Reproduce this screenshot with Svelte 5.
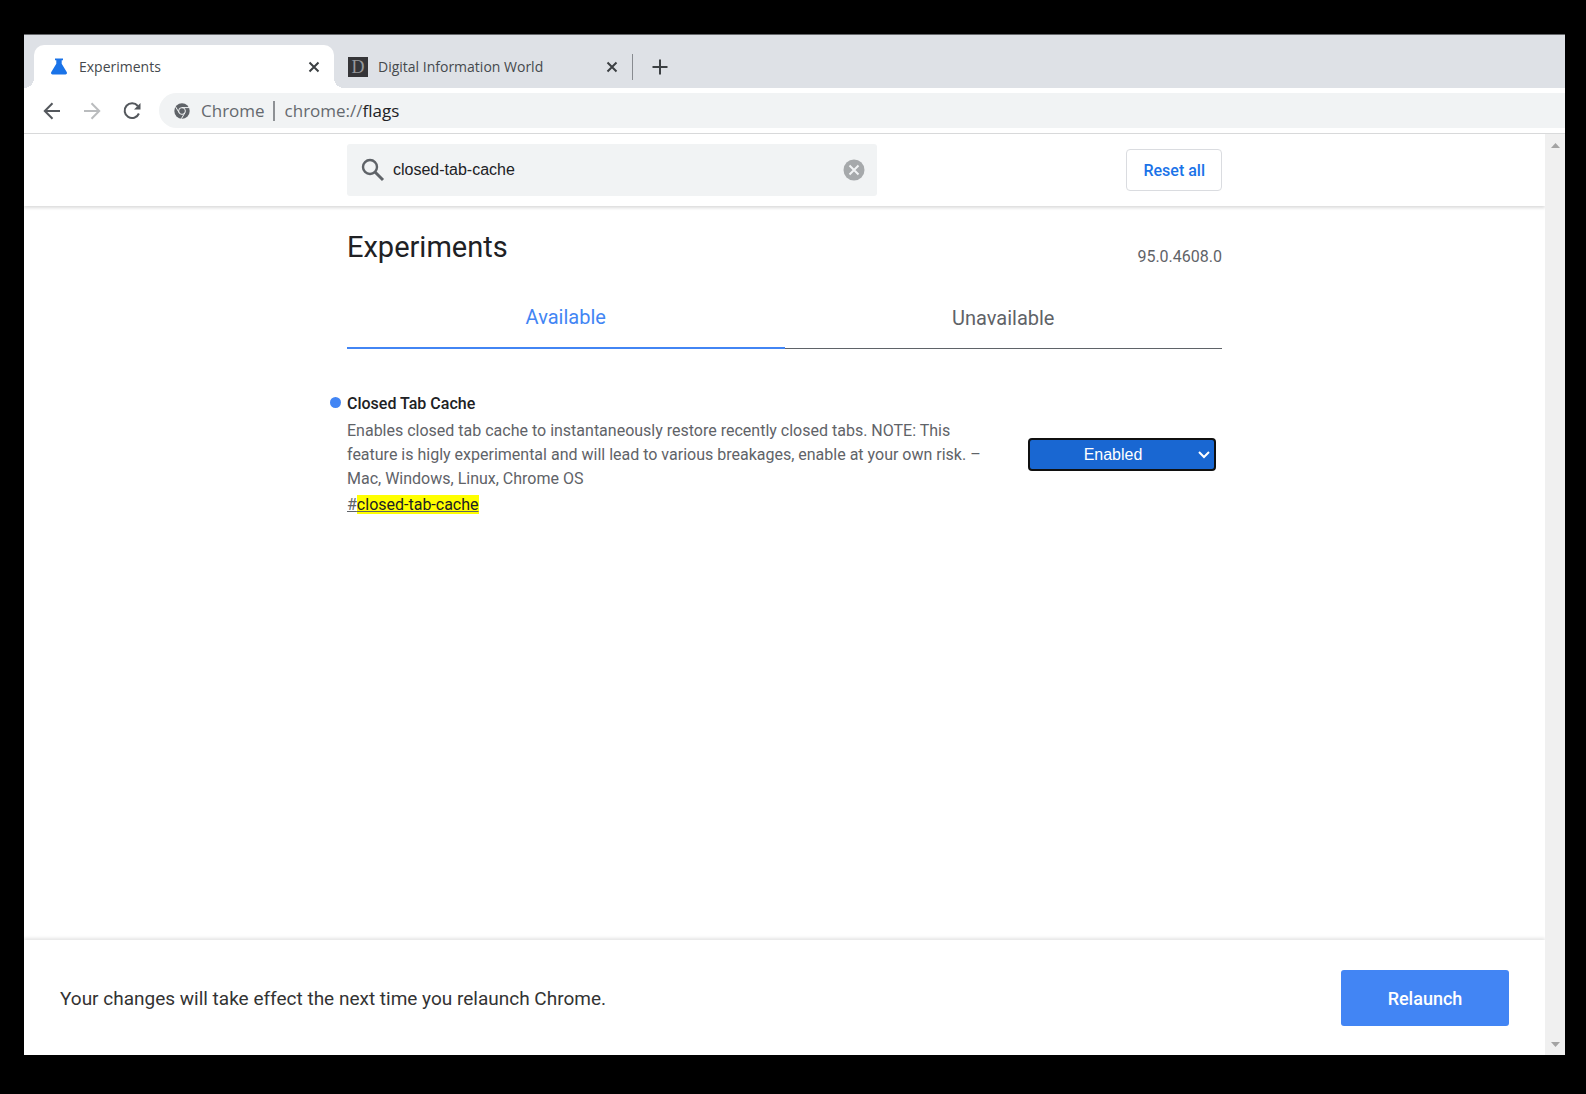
<script lang="ts">
  type Flag = {
    id: string;
    name: string;
    description: string;
    platforms: string;
    value: string;
  };

  const flags: Flag[] = $state([
    {
      id: 'closed-tab-cache',
      name: 'Closed Tab Cache',
      description:
        'Enables closed tab cache to instantaneously restore recently closed tabs. NOTE: This feature is higly experimental and will lead to various breakages, enable at your own risk.',
      platforms: 'Mac, Windows, Linux, Chrome OS',
      value: 'Enabled',
    },
  ]);

  let query = $state('closed-tab-cache');
  let view = $state('Available');
  let shown = $derived(
    view === 'Available' ? flags.filter((f) => f.id.includes(query.toLowerCase())) : []
  );
</script>

{#snippet cross()}
  <svg width="12" height="12" viewBox="0 0 12 12" aria-hidden="true">
    <path d="M1.5 1.5l9 9M10.5 1.5l-9 9" stroke="#3c4043" stroke-width="2" />
  </svg>
{/snippet}

<div class="desktop">
  <div class="window">
    <div class="tab-strip">
      <div class="tab active">
        <svg width="16" height="17" viewBox="0 0 16 17" aria-hidden="true">
          <path
            d="M4 0.5h8v1.7h-1.3v3.5l5 8.300c.7 1.300 0 2.500-1.200 2.500h-13c-1.200 0-1.900-1.200-1.200-2.500l5-8.300V2.200H4z"
            fill="#1a73e8"
          />
        </svg>
        <span class="tab-title">Experiments</span>
        <button class="icon-btn" aria-label="Close Experiments">{@render cross()}</button>
      </div>
      <div class="tab">
        <span class="favicon" aria-hidden="true">D</span>
        <span class="tab-title">Digital Information World</span>
        <button class="icon-btn" aria-label="Close Digital Information World">
          {@render cross()}
        </button>
      </div>
      <button class="icon-btn new-tab" aria-label="New tab">
        <svg width="16" height="16" viewBox="0 0 16 16" aria-hidden="true">
          <path d="M8 .5v15M.5 8h15" stroke="#3c4043" stroke-width="2" />
        </svg>
      </button>
    </div>

    <div class="toolbar">
      <button class="icon-btn" aria-label="Back">
        <svg width="18" height="18" viewBox="0 0 18 18" fill="none" aria-hidden="true">
          <path d="M17 9H2M9.5 1.3L1.8 9l7.7 7.7" stroke="#54585d" stroke-width="2" />
        </svg>
      </button>
      <button class="icon-btn" aria-label="Forward" disabled>
        <svg width="18" height="18" viewBox="0 0 18 18" fill="none" aria-hidden="true">
          <path d="M1 9h15M8.5 1.3L16.2 9l-7.7 7.7" stroke="#babcbe" stroke-width="2" />
        </svg>
      </button>
      <button class="icon-btn" aria-label="Reload">
        <svg width="18" height="18" viewBox="0 0 18 18" fill="none" aria-hidden="true">
          <path d="M14.8 4A7.4 7.4 0 1 0 15.9 11.5" stroke="#54585d" stroke-width="2" />
          <path d="M17.5 1v6.500h-6.500z" fill="#54585d" />
        </svg>
      </button>
      <div class="omnibox">
        <svg width="16" height="16" viewBox="0 0 16 16" fill="none" aria-hidden="true">
          <circle cx="8" cy="8" r="7.7" fill="#5f6368" />
          <circle cx="8" cy="8" r="3.4" stroke="#f1f3f4" />
          <path
            d="M8 4.600h7M5.100 9.700L1.500 3.600M10.900 9.700L7.400 15.700"
            stroke="#f1f3f4"
          />
        </svg>
        <span class="site">Chrome</span>
        <span class="url">chrome://<b>flags</b></span>
      </div>
    </div>

    <div class="viewport">
      <div class="page">
        <header>
          <div class="column">
            <label class="search">
              <svg width="24" height="24" viewBox="0 0 24 24" fill="none" aria-hidden="true">
                <circle cx="9" cy="9" r="7" stroke="#5f6368" stroke-width="2.4" />
                <path d="M14 14l8 8" stroke="#5f6368" stroke-width="3" />
              </svg>
              <input type="text" aria-label="Search flags" bind:value={query} />
              <button class="icon-btn" aria-label="Clear search" onclick={() => (query = '')}>
                <svg width="22" height="22" viewBox="0 0 22 22" aria-hidden="true">
                  <circle cx="11" cy="11" r="10.5" fill="#a6a9ab" />
                  <path d="M6.5 6.5l9 9M15.5 6.5l-9 9" stroke="#f1f3f4" stroke-width="2" />
                </svg>
              </button>
            </label>
            <button class="reset">Reset all</button>
          </div>
        </header>

        <main>
          <div class="title-row">
            <h1>Experiments</h1>
            <span class="version">95.0.4608.0</span>
          </div>

          <div class="views" role="tablist">
            {#each ['Available', 'Unavailable'] as name}
              <button
                role="tab"
                aria-selected={view === name}
                class:selected={view === name}
                onclick={() => (view = name)}
              >
                {name}
              </button>
            {/each}
          </div>

          {#each shown as flag (flag.id)}
            <section class="flag">
              <div class="about">
                <h2 class:changed={flag.value !== 'Default'}>{flag.name}</h2>
                <p>{flag.description} – {flag.platforms}</p>
                <a href="#{flag.id}">#<mark>{flag.id}</mark></a>
              </div>
              <div class="choice">
                <select aria-label={flag.name} bind:value={flag.value}>
                  <option>Default</option>
                  <option>Enabled</option>
                  <option>Disabled</option>
                </select>
                <svg width="12" height="8" viewBox="0 0 12 8" fill="none" aria-hidden="true">
                  <path d="M1 1l5 5 5-5" stroke="#fff" stroke-width="2" />
                </svg>
              </div>
            </section>
          {/each}
        </main>

        <footer>
          <span>Your changes will take effect the next time you relaunch Chrome.</span>
          <button class="relaunch">Relaunch</button>
        </footer>
      </div>

      <div class="scrollbar" aria-hidden="true">
        <svg width="9" height="5" viewBox="0 0 9 5"><path d="M0 5L4.5 0 9 5z" fill="#a3a3a3" /></svg>
        <svg width="9" height="5" viewBox="0 0 9 5"><path d="M0 0l4.5 5L9 0z" fill="#a3a3a3" /></svg>
      </div>
    </div>
  </div>
</div>

<style>
  :global(body) {
    margin: 0;
    background: #000;
  }

  .desktop {
    box-sizing: border-box;
    display: flex;
    min-height: 100vh;
    padding: 34px 21px 39px 24px;
    font-family: Roboto, sans-serif;
    color: #202124;
  }

  .window {
    display: flex;
    flex: 1;
    flex-direction: column;
    min-width: 0;
    border-top: 1px solid #66686b;
    background: #fff;
  }

  button {
    font: inherit;
    cursor: pointer;
  }

  svg {
    display: block;
    flex: none;
  }

  .icon-btn {
    display: flex;
    padding: 0;
    border: 0;
    background: none;
  }

  /* Tab strip */
  .tab-strip {
    display: flex;
    align-items: flex-end;
    height: 53px;
    padding-left: 10px;
    background: #dee1e6;
  }

  .tab {
    position: relative;
    box-sizing: border-box;
    display: flex;
    align-items: center;
    width: 298px;
    height: 43px;
    padding: 0 14px;
    font: 14px 'Open Sans', sans-serif;
    color: #45494d;
  }

  .tab.active {
    width: 300px;
    padding-left: 17px;
    border-radius: 10px 10px 0 0;
    background: #fff;
  }

  /* Curved feet of the active tab */
  .tab.active::before,
  .tab.active::after {
    content: '';
    position: absolute;
    bottom: 0;
    left: -10px;
    width: 10px;
    height: 10px;
    background: radial-gradient(circle at 0 0, transparent 10px, #fff 10px);
  }

  .tab.active::after {
    left: 100%;
    background: radial-gradient(circle at 100% 0, transparent 10px, #fff 10px);
  }

  .tab-title {
    flex: 1;
    margin-left: 12px;
    white-space: nowrap;
  }

  .favicon {
    width: 20px;
    height: 20px;
    margin-right: -2px;
    background: #353538;
    color: #96989b;
    font: 18px/20px 'Liberation Serif', serif;
    text-align: center;
  }

  .new-tab {
    margin-bottom: 8px;
    padding: 5px 19px;
    border-left: 1px solid #888b90;
  }

  /* Toolbar */
  .toolbar {
    display: flex;
    align-items: center;
    gap: 22px;
    height: 45px;
    padding-left: 19px;
    border-bottom: 1px solid #d9dadb;
  }

  .omnibox {
    display: flex;
    flex: 1;
    align-items: center;
    height: 35px;
    margin-left: -4px;
    padding-left: 15px;
    border-radius: 18px 0 0 18px;
    background: #f1f3f4;
    color: #65696e;
    font: 17px 'Open Sans', sans-serif;
  }

  .site {
    margin-left: 11px;
    padding-right: 8px;
    border-right: 2px solid #8e9195;
    line-height: 20px;
  }

  .url {
    margin-left: 10px;
  }

  .url b {
    color: #202124;
    font-weight: 400;
  }

  /* Page */
  .viewport {
    display: flex;
    flex: 1;
  }

  .page {
    display: flex;
    flex: 1;
    flex-direction: column;
    min-width: 0;
  }

  .scrollbar {
    box-sizing: border-box;
    display: flex;
    flex-direction: column;
    align-items: center;
    justify-content: space-between;
    width: 20px;
    padding: 9px 0 8px;
    background: #f0f0f0;
  }

  header {
    padding: 10px 0;
    box-shadow: 0 2px 3px rgba(0, 0, 0, 0.14);
  }

  .column,
  main {
    width: 100%;
    max-width: 875px;
    margin: 0 auto;
  }

  .column {
    display: flex;
    align-items: center;
    justify-content: space-between;
  }

  .search {
    box-sizing: border-box;
    display: flex;
    align-items: center;
    width: 530px;
    height: 52px;
    padding: 0 12px 0 14px;
    border-radius: 3px;
    background: #f1f3f4;
  }

  .search input {
    flex: 1;
    min-width: 0;
    margin-left: 8px;
    padding: 0;
    border: 0;
    outline: 0;
    background: none;
    color: #202124;
    font: 16px 'Liberation Sans', sans-serif;
  }

  .reset {
    height: 42px;
    padding: 0 16px;
    border: 1px solid #dadce0;
    border-radius: 4px;
    background: #fff;
    color: #1a73e8;
    font-size: 16px;
    font-weight: 500;
  }

  main {
    flex: 1;
  }

  .title-row {
    display: flex;
    align-items: flex-end;
    justify-content: space-between;
    padding-top: 23px;
  }

  h1 {
    margin: 0;
    font-size: 29px;
    font-weight: 400;
    line-height: 36px;
  }

  .version {
    color: #5f6368;
    font-size: 16px;
    line-height: 16px;
  }

  .views {
    display: flex;
    margin-top: 22px;
  }

  .views button {
    flex: 1;
    height: 62px;
    padding: 0;
    border: 0;
    border-bottom: 1px solid #5f6368;
    background: none;
    color: #5f6368;
    font-size: 20px;
  }

  .views .selected {
    border-bottom: 2px solid #4285f4;
    color: #4285f4;
  }

  .flag {
    display: flex;
    align-items: center;
    justify-content: space-between;
    padding: 43px 6px 0 0;
    font-size: 16px;
    line-height: 24px;
  }

  .about {
    width: 650px;
    color: #5f6368;
  }

  h2 {
    position: relative;
    margin: 0;
    color: #202124;
    font-size: 16px;
    font-weight: 500;
  }

  .changed::before {
    content: '';
    position: absolute;
    top: 5px;
    left: -17px;
    width: 11px;
    height: 11px;
    border-radius: 50%;
    background: #4285f4;
  }

  p {
    margin: 3px 0 2px;
  }

  a {
    color: inherit;
  }

  mark {
    background: #ff0;
    color: #202124;
  }

  .choice {
    position: relative;
    width: 188px;
  }

  .choice select {
    display: block;
    width: 100%;
    height: 33px;
    padding: 0 18px 0 0;
    border: 2px solid #101010;
    border-radius: 4px;
    appearance: none;
    background: #1967d2;
    color: #fff;
    font: 16px 'Liberation Sans', sans-serif;
    text-align: center;
    text-align-last: center;
  }

  .choice svg {
    position: absolute;
    top: 13px;
    right: 6px;
    pointer-events: none;
  }

  footer {
    display: flex;
    align-items: center;
    justify-content: space-between;
    padding: 30px 36px 29px;
    box-shadow: 0 -2px 3px rgba(0, 0, 0, 0.1);
    color: #333;
    font-size: 19px;
  }

  .relaunch {
    width: 168px;
    height: 56px;
    border: 0;
    border-radius: 3px;
    background: #4285f4;
    color: #fff;
    font-size: 18px;
    font-weight: 500;
  }
</style>
